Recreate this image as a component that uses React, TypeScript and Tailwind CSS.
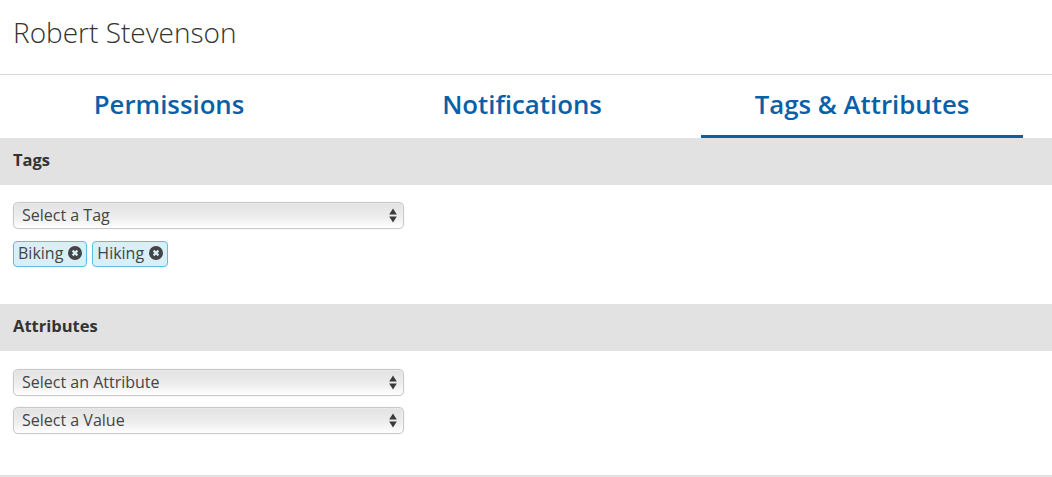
import React from "react";

function Arrows() {
  return (
    <svg className="absolute right-[7px] top-[6px]" width="8" height="15" viewBox="0 0 8 15" fill="#3a3a3a">
      <path d="M4 0.5 L7.8 6.5 H0.2 Z" />
      <path d="M4 14.5 L7.8 8.5 H0.2 Z" />
    </svg>
  );
}

function FakeSelect({ label, className = "" }: { label: string; className?: string }) {
  return (
    <div className={`relative w-[391px] h-[27px] ${className}`}>
      <select className="appearance-none block w-full h-full rounded-[5px] border border-[#c8c8c8] bg-gradient-to-b from-[#e2e2e2] via-[#eeeeee] via-60% to-[#ffffff] pl-[8px] pb-[2px] text-[16px] text-[#444] shadow-[inset_0_0_2px_rgba(255,255,255,0.9),0_0_1px_rgba(0,0,0,0.2)]">
        <option>{label}</option>
      </select>
      <Arrows />
    </div>
  );
}

function Tag({ label }: { label: string }) {
  return (
    <span className="flex items-center gap-[5px] h-[26px] pl-[4px] pr-[4px] pb-[2px] rounded-[4px] border border-[#5bbfe2] bg-[#d8eff8] text-[16px] text-[#444]">
      {label}
      <svg width="14" height="14" viewBox="0 0 14 14">
        <circle cx="7" cy="7" r="7" fill="#444" />
        <path d="M4.6 4.6 L9.4 9.4 M9.4 4.6 L4.6 9.4" stroke="#d8eff8" strokeWidth="2.2" />
      </svg>
    </span>
  );
}

function SectionHeader({ label }: { label: string }) {
  return (
    <div className="h-[47px] bg-[#e2e2e2] flex items-center pl-[13px] pb-[3px] text-[16.5px] font-bold text-[#333]">{label}</div>
  );
}

export default function App() {
  return (
    <div className="w-[1052px] h-[477px] bg-white overflow-hidden font-['Open_Sans',sans-serif]">
      <div className="h-[75px] border-b border-[#d8d8d8] flex items-center pl-[13px] pb-[11px] text-[28px] font-light text-[#333]">
        Robert Stevenson
      </div>
      <div className="flex h-[63px] pl-[8px] text-[25.8px] font-semibold text-[#0a60a8]">
        <div className="w-[322px] flex items-center justify-center pb-[5px]">Permissions</div>
        <div className="w-[322px] ml-[31px] flex items-center justify-center pb-[5px]">Notifications</div>
        <div className="w-[322px] ml-[18px] flex items-center justify-center pb-[2px] border-b-[3px] border-[#0a60a8]">Tags &amp; Attributes</div>
      </div>
      <SectionHeader label="Tags" />
      <div className="h-[119px] pl-[13px] pt-[17px]">
        <FakeSelect label="Select a Tag" />
        <div className="flex gap-[5px] mt-[12px]">
          <Tag label="Biking" />
          <Tag label="Hiking" />
        </div>
      </div>
      <SectionHeader label="Attributes" />
      <div className="h-[126px] pl-[13px] pt-[18px] border-b-2 border-[#e2e2e2]">
        <FakeSelect label="Select an Attribute" />
        <FakeSelect label="Select a Value" className="mt-[11px]" />
      </div>
    </div>
  );
}
